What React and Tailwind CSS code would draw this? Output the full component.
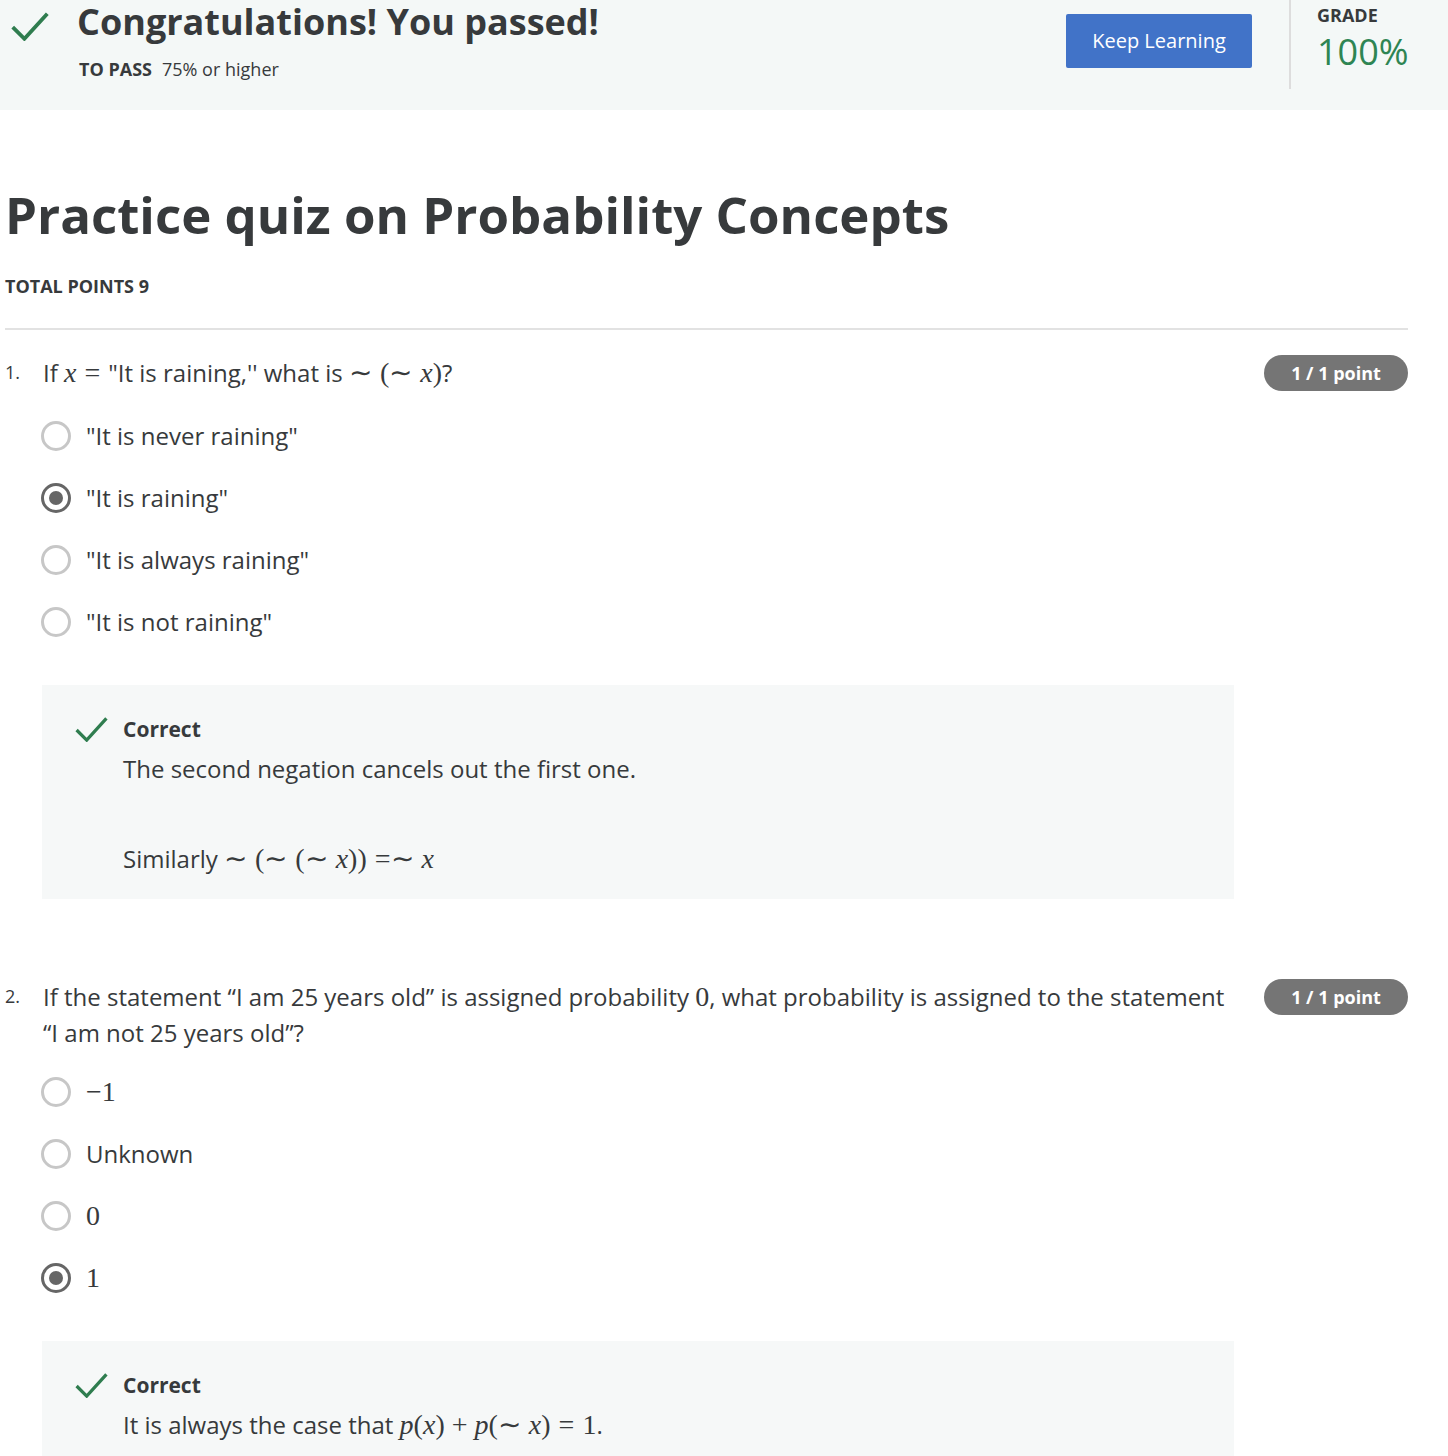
import React from "react";

const M = ({ children }) => (
  <span className="font-['Liberation_Serif',serif] text-[28px] leading-none">{children}</span>
);
const V = ({ children }) => <i className="font-['Liberation_Serif',serif]">{children}</i>;
const R = ({ children, l = true, r = true }) => (
  <span className={(l ? "ml-[8px] " : "") + (r ? "mr-[8px]" : "")}>{children}</span>
);

const Check = ({ className }) => (
  <svg viewBox="0 0 34 26" className={className} fill="none">
    <path d="M1.5 13.5 L12 24 L32.5 1.5" stroke="#2f7d4f" strokeWidth="3.4" />
  </svg>
);

const Radio = ({ checked, label }) => (
  <div className="flex items-center h-[62px] -ml-[2px]">
    <div
      className={
        checked
          ? "w-[30px] h-[30px] rounded-full border-[3px] border-[#666] flex items-center justify-center"
          : "w-[30px] h-[30px] rounded-full border-[3px] border-[#c7c7c7]"
      }
    >
      {checked && <div className="w-[14px] h-[14px] rounded-full bg-[#666]" />}
    </div>
    <div className="ml-[15px] text-[24px] text-[#373a3c]">{label}</div>
  </div>
);

const Badge = () => (
  <div className="shrink-0 w-[144px] h-[36px] rounded-full bg-[#757575] text-white font-bold text-[18px] flex items-center justify-center">
    1 / 1 point
  </div>
);

const Feedback = ({ children }) => (
  <div className="w-[1192px] -ml-[1px] bg-[#f6f8f8] pl-[33px] pt-[30px] pb-[22px] flex">
    <Check className="w-[33px] h-[25px] mt-[2px] shrink-0" />
    <div className="ml-[15px] text-[#373a3c]">
      <div className="text-[21px] font-bold leading-[28px]">Correct</div>
      <div className="text-[24px] leading-[36px] mt-[8px]">{children}</div>
    </div>
  </div>
);

const Question = ({ num, text, options, feedback, className, optionsClass = "mt-[14px]" }) => (
  <div className={className}>
    <div className="flex">
      <div className="w-[38px] shrink-0 text-[18px] leading-[34px] text-[#373a3c]">{num}</div>
      <div className="flex-1 text-[24px] leading-[36px] text-[#373a3c] pr-[26px]">{text}</div>
      <Badge />
    </div>
    <div className="pl-[38px]">
      <div className={optionsClass}>
        {options.map((o, i) => (
          <Radio key={i} checked={o.checked} label={o.label} />
        ))}
      </div>
      <div className="mt-[32px]">
        <Feedback>{feedback}</Feedback>
      </div>
    </div>
  </div>
);

export default function App() {
  return (
    <div className="w-[1448px] h-[1456px] overflow-hidden bg-white font-['Open_Sans',sans-serif] text-[#373a3c]">
      {/* result banner */}
      <div className="h-[110px] bg-[#f4f8f7] flex">
        <Check className="w-[38px] h-[29px] ml-[11px] mt-[12px] shrink-0" />
        <div className="ml-[28px] pt-[4px] flex-1">
          <div className="text-[36px] font-bold leading-[36px]">Congratulations! You passed!</div>
          <div className="mt-[17px] ml-[2px] text-[18px] leading-[24px]">
            <span className="font-bold">TO PASS</span>
            <span className="ml-[10px]">75% or higher</span>
          </div>
        </div>
        <div className="pt-[14px]">
          <button className="w-[186px] h-[54px] rounded-[2px] bg-[#4173c8] text-white text-[20px]">
            Keep Learning
          </button>
        </div>
        <div className="ml-[37px] w-[2px] h-[89px] bg-[#dddddd]" />
        <div className="ml-[26px] w-[131px] pt-[3px]">
          <div className="text-[18px] font-bold leading-[24px]">GRADE</div>
          <div className="text-[36px] leading-[40px] mt-[5px] text-[#2e8553]">100%</div>
        </div>
      </div>

      <div className="pl-[5px] pr-[40px]">
        <h1 className="mt-[72px] text-[51px] font-bold leading-[64px]">
          Practice quiz on Probability Concepts
        </h1>
        <div className="mt-[28px] text-[18px] font-bold leading-[24px]">TOTAL POINTS 9</div>
        <div className="mt-[30px] h-[2px] bg-[#e2e2e2]" />

        <Question
          className="mt-[25px]"
          num="1."
          text={
            <>
              If{" "}
              <M>
                <V>x</V>
                <R>=</R>
              </M>
              "It is raining,'' what is{" "}
              <M>
                <R l={false}>∼</R>(<R l={false}>∼</R>
                <V>x</V>)
              </M>
              ?
            </>
          }
          options={[
            { label: '"It is never raining"' },
            { label: '"It is raining"', checked: true },
            { label: '"It is always raining"' },
            { label: '"It is not raining"' },
          ]}
          feedback={
            <>
              <div>The second negation cancels out the first one.</div>
              <div className="mt-[54px]">
                Similarly{" "}
                <M>
                  <R l={false}>∼</R>(<R l={false}>∼</R>(<R l={false}>∼</R>
                  <V>x</V>))
                  <R r={false}>=</R>
                  <R l={false}>∼</R>
                  <V>x</V>
                </M>
              </div>
            </>
          }
        />

        <Question
          className="mt-[80px]"
          optionsClass="mt-[10px]"
          num="2."
          text={
            <>
              If the statement “I am 25 years old” is assigned probability <M>0</M>, what probability is
              assigned to the statement “I am not 25 years old”?
            </>
          }
          options={[
            { label: <M>−1</M> },
            { label: "Unknown" },
            { label: <M>0</M> },
            { label: <M>1</M>, checked: true },
          ]}
          feedback={
            <>
              It is always the case that{" "}
              <M>
                <V>p</V>(<V>x</V>)<span className="mx-[7px]">+</span>
                <V>p</V>(<R l={false}>∼</R>
                <V>x</V>)<R>=</R>1
              </M>
              .
            </>
          }
        />
      </div>
    </div>
  );
}
